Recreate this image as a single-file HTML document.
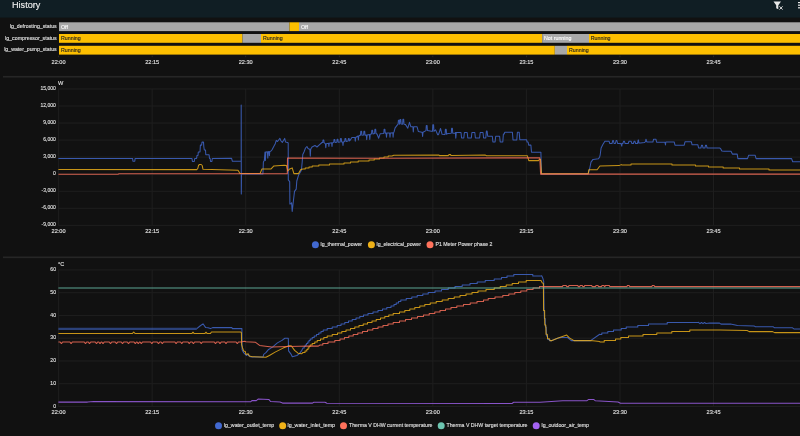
<!DOCTYPE html>
<html><head><meta charset="utf-8"><title>History</title>
<style>html,body{margin:0;padding:0;background:#111111;width:800px;height:436px;overflow:hidden;font-family:"Liberation Sans", sans-serif;}svg{display:block;will-change:transform;}</style>
</head><body><svg width="800" height="436" viewBox="0 0 800 436" font-family='"Liberation Sans", sans-serif'><rect x="0" y="0" width="800" height="17.6" fill="#101e24"/><text x="12.00" y="8.20" font-size="9.8" text-anchor="start" fill="#f0f0f0" stroke="#f0f0f0" stroke-width="0.12" font-weight="normal" textLength="28.4" lengthAdjust="spacingAndGlyphs">History</text><text x="56.70" y="27.90" font-size="5.6" text-anchor="end" fill="#e1e1e1" stroke="#e1e1e1" stroke-width="0.12" font-weight="normal" textLength="46.9" lengthAdjust="spacingAndGlyphs">lg_defrosting_status</text><rect x="59" y="22.3" width="230.50" height="8.8" fill="#a8a8a8"/><rect x="289.5" y="22.3" width="9.50" height="8.8" fill="#fdbf00"/><rect x="299" y="22.3" width="501.00" height="8.8" fill="#a8a8a8"/><text x="61.00" y="28.50" font-size="5.3" text-anchor="start" fill="#fff" stroke="#fff" stroke-width="0.12" font-weight="normal">Off</text><text x="301.00" y="28.50" font-size="5.3" text-anchor="start" fill="#fff" stroke="#fff" stroke-width="0.12" font-weight="normal">Off</text><text x="56.70" y="39.60" font-size="5.6" text-anchor="end" fill="#e1e1e1" stroke="#e1e1e1" stroke-width="0.12" font-weight="normal" textLength="51.7" lengthAdjust="spacingAndGlyphs">lg_compressor_status</text><rect x="59" y="34.0" width="183.50" height="8.8" fill="#fdbf00"/><rect x="242.5" y="34.0" width="18.50" height="8.8" fill="#a8a8a8"/><rect x="261" y="34.0" width="281.20" height="8.8" fill="#fdbf00"/><rect x="542.2" y="34.0" width="46.80" height="8.8" fill="#a8a8a8"/><rect x="589" y="34.0" width="211.00" height="8.8" fill="#fdbf00"/><text x="61.00" y="40.20" font-size="5.3" text-anchor="start" fill="#222" stroke="#222" stroke-width="0.12" font-weight="normal">Running</text><text x="263.00" y="40.20" font-size="5.3" text-anchor="start" fill="#222" stroke="#222" stroke-width="0.12" font-weight="normal">Running</text><text x="544.00" y="40.20" font-size="5.3" text-anchor="start" fill="#fff" stroke="#fff" stroke-width="0.12" font-weight="normal">Not running</text><text x="590.80" y="40.20" font-size="5.3" text-anchor="start" fill="#222" stroke="#222" stroke-width="0.12" font-weight="normal">Running</text><text x="56.70" y="51.40" font-size="5.6" text-anchor="end" fill="#e1e1e1" stroke="#e1e1e1" stroke-width="0.12" font-weight="normal" textLength="52.5" lengthAdjust="spacingAndGlyphs">lg_water_pump_status</text><rect x="59" y="45.8" width="495.80" height="8.8" fill="#fdbf00"/><rect x="554.8" y="45.8" width="12.20" height="8.8" fill="#a8a8a8"/><rect x="567" y="45.8" width="233.00" height="8.8" fill="#fdbf00"/><text x="61.00" y="52.00" font-size="5.3" text-anchor="start" fill="#222" stroke="#222" stroke-width="0.12" font-weight="normal">Running</text><text x="569.00" y="52.00" font-size="5.3" text-anchor="start" fill="#222" stroke="#222" stroke-width="0.12" font-weight="normal">Running</text><rect x="58.20" y="55.6" width="0.8" height="1.6" fill="#2c2c2c"/><text x="58.60" y="63.60" font-size="5.6" text-anchor="middle" fill="#e1e1e1" stroke="#e1e1e1" stroke-width="0.12" font-weight="normal">22:00</text><rect x="151.76" y="55.6" width="0.8" height="1.6" fill="#2c2c2c"/><text x="152.16" y="63.60" font-size="5.6" text-anchor="middle" fill="#e1e1e1" stroke="#e1e1e1" stroke-width="0.12" font-weight="normal">22:15</text><rect x="245.32" y="55.6" width="0.8" height="1.6" fill="#2c2c2c"/><text x="245.72" y="63.60" font-size="5.6" text-anchor="middle" fill="#e1e1e1" stroke="#e1e1e1" stroke-width="0.12" font-weight="normal">22:30</text><rect x="338.88" y="55.6" width="0.8" height="1.6" fill="#2c2c2c"/><text x="339.28" y="63.60" font-size="5.6" text-anchor="middle" fill="#e1e1e1" stroke="#e1e1e1" stroke-width="0.12" font-weight="normal">22:45</text><rect x="432.44" y="55.6" width="0.8" height="1.6" fill="#2c2c2c"/><text x="432.84" y="63.60" font-size="5.6" text-anchor="middle" fill="#e1e1e1" stroke="#e1e1e1" stroke-width="0.12" font-weight="normal">23:00</text><rect x="526.00" y="55.6" width="0.8" height="1.6" fill="#2c2c2c"/><text x="526.40" y="63.60" font-size="5.6" text-anchor="middle" fill="#e1e1e1" stroke="#e1e1e1" stroke-width="0.12" font-weight="normal">23:15</text><rect x="619.56" y="55.6" width="0.8" height="1.6" fill="#2c2c2c"/><text x="619.96" y="63.60" font-size="5.6" text-anchor="middle" fill="#e1e1e1" stroke="#e1e1e1" stroke-width="0.12" font-weight="normal">23:30</text><rect x="713.12" y="55.6" width="0.8" height="1.6" fill="#2c2c2c"/><text x="713.52" y="63.60" font-size="5.6" text-anchor="middle" fill="#e1e1e1" stroke="#e1e1e1" stroke-width="0.12" font-weight="normal">23:45</text><rect x="3" y="75.95" width="797" height="1.6" fill="#262626"/><rect x="3" y="256.5" width="797" height="1.6" fill="#262626"/><rect x="58.1" y="88.45" width="742" height="1" fill="#1f1f1f"/><text x="55.90" y="89.95" font-size="5.6" text-anchor="end" fill="#e1e1e1" stroke="#e1e1e1" stroke-width="0.12" font-weight="normal" textLength="15.42" lengthAdjust="spacingAndGlyphs">15,000</text><rect x="58.1" y="105.50" width="742" height="1" fill="#1f1f1f"/><text x="55.90" y="107.00" font-size="5.6" text-anchor="end" fill="#e1e1e1" stroke="#e1e1e1" stroke-width="0.12" font-weight="normal" textLength="15.42" lengthAdjust="spacingAndGlyphs">12,000</text><rect x="58.1" y="122.55" width="742" height="1" fill="#1f1f1f"/><text x="55.90" y="124.05" font-size="5.6" text-anchor="end" fill="#e1e1e1" stroke="#e1e1e1" stroke-width="0.12" font-weight="normal" textLength="12.62" lengthAdjust="spacingAndGlyphs">9,000</text><rect x="58.1" y="139.60" width="742" height="1" fill="#1f1f1f"/><text x="55.90" y="141.10" font-size="5.6" text-anchor="end" fill="#e1e1e1" stroke="#e1e1e1" stroke-width="0.12" font-weight="normal" textLength="12.62" lengthAdjust="spacingAndGlyphs">6,000</text><rect x="58.1" y="156.65" width="742" height="1" fill="#1f1f1f"/><text x="55.90" y="158.15" font-size="5.6" text-anchor="end" fill="#e1e1e1" stroke="#e1e1e1" stroke-width="0.12" font-weight="normal" textLength="12.62" lengthAdjust="spacingAndGlyphs">3,000</text><rect x="58.1" y="173.70" width="742" height="1" fill="#1f1f1f"/><text x="55.90" y="175.20" font-size="5.6" text-anchor="end" fill="#e1e1e1" stroke="#e1e1e1" stroke-width="0.12" font-weight="normal" textLength="2.8" lengthAdjust="spacingAndGlyphs">0</text><rect x="58.1" y="190.75" width="742" height="1" fill="#1f1f1f"/><text x="55.90" y="192.25" font-size="5.6" text-anchor="end" fill="#e1e1e1" stroke="#e1e1e1" stroke-width="0.12" font-weight="normal" textLength="14.29" lengthAdjust="spacingAndGlyphs">-3,000</text><rect x="58.1" y="207.80" width="742" height="1" fill="#1f1f1f"/><text x="55.90" y="209.30" font-size="5.6" text-anchor="end" fill="#e1e1e1" stroke="#e1e1e1" stroke-width="0.12" font-weight="normal" textLength="14.29" lengthAdjust="spacingAndGlyphs">-6,000</text><rect x="58.1" y="224.85" width="742" height="1" fill="#1f1f1f"/><text x="55.90" y="226.35" font-size="5.6" text-anchor="end" fill="#e1e1e1" stroke="#e1e1e1" stroke-width="0.12" font-weight="normal" textLength="14.29" lengthAdjust="spacingAndGlyphs">-9,000</text><rect x="58.10" y="88.95" width="1" height="136.40" fill="#1f1f1f"/><rect x="151.66" y="88.95" width="1" height="136.40" fill="#1f1f1f"/><rect x="245.22" y="88.95" width="1" height="136.40" fill="#1f1f1f"/><rect x="338.78" y="88.95" width="1" height="136.40" fill="#1f1f1f"/><rect x="432.34" y="88.95" width="1" height="136.40" fill="#1f1f1f"/><rect x="525.90" y="88.95" width="1" height="136.40" fill="#1f1f1f"/><rect x="619.46" y="88.95" width="1" height="136.40" fill="#1f1f1f"/><rect x="713.02" y="88.95" width="1" height="136.40" fill="#1f1f1f"/><text x="58.60" y="233.10" font-size="5.6" text-anchor="middle" fill="#e1e1e1" stroke="#e1e1e1" stroke-width="0.12" font-weight="normal">22:00</text><text x="152.16" y="233.10" font-size="5.6" text-anchor="middle" fill="#e1e1e1" stroke="#e1e1e1" stroke-width="0.12" font-weight="normal">22:15</text><text x="245.72" y="233.10" font-size="5.6" text-anchor="middle" fill="#e1e1e1" stroke="#e1e1e1" stroke-width="0.12" font-weight="normal">22:30</text><text x="339.28" y="233.10" font-size="5.6" text-anchor="middle" fill="#e1e1e1" stroke="#e1e1e1" stroke-width="0.12" font-weight="normal">22:45</text><text x="432.84" y="233.10" font-size="5.6" text-anchor="middle" fill="#e1e1e1" stroke="#e1e1e1" stroke-width="0.12" font-weight="normal">23:00</text><text x="526.40" y="233.10" font-size="5.6" text-anchor="middle" fill="#e1e1e1" stroke="#e1e1e1" stroke-width="0.12" font-weight="normal">23:15</text><text x="619.96" y="233.10" font-size="5.6" text-anchor="middle" fill="#e1e1e1" stroke="#e1e1e1" stroke-width="0.12" font-weight="normal">23:30</text><text x="713.52" y="233.10" font-size="5.6" text-anchor="middle" fill="#e1e1e1" stroke="#e1e1e1" stroke-width="0.12" font-weight="normal">23:45</text><text x="58.00" y="85.00" font-size="5.6" text-anchor="start" fill="#e1e1e1" stroke="#e1e1e1" stroke-width="0.12" font-weight="normal">W</text><rect x="58.1" y="269.40" width="742" height="1" fill="#1f1f1f"/><text x="56.00" y="271.10" font-size="5.6" text-anchor="end" fill="#e1e1e1" stroke="#e1e1e1" stroke-width="0.12" font-weight="normal" textLength="5.73" lengthAdjust="spacingAndGlyphs">60</text><rect x="58.1" y="292.17" width="742" height="1" fill="#1f1f1f"/><text x="56.00" y="293.87" font-size="5.6" text-anchor="end" fill="#e1e1e1" stroke="#e1e1e1" stroke-width="0.12" font-weight="normal" textLength="5.73" lengthAdjust="spacingAndGlyphs">50</text><rect x="58.1" y="314.94" width="742" height="1" fill="#1f1f1f"/><text x="56.00" y="316.64" font-size="5.6" text-anchor="end" fill="#e1e1e1" stroke="#e1e1e1" stroke-width="0.12" font-weight="normal" textLength="5.73" lengthAdjust="spacingAndGlyphs">40</text><rect x="58.1" y="337.71" width="742" height="1" fill="#1f1f1f"/><text x="56.00" y="339.41" font-size="5.6" text-anchor="end" fill="#e1e1e1" stroke="#e1e1e1" stroke-width="0.12" font-weight="normal" textLength="5.73" lengthAdjust="spacingAndGlyphs">30</text><rect x="58.1" y="360.48" width="742" height="1" fill="#1f1f1f"/><text x="56.00" y="362.18" font-size="5.6" text-anchor="end" fill="#e1e1e1" stroke="#e1e1e1" stroke-width="0.12" font-weight="normal" textLength="5.73" lengthAdjust="spacingAndGlyphs">20</text><rect x="58.1" y="383.25" width="742" height="1" fill="#1f1f1f"/><text x="56.00" y="384.95" font-size="5.6" text-anchor="end" fill="#e1e1e1" stroke="#e1e1e1" stroke-width="0.12" font-weight="normal" textLength="5.73" lengthAdjust="spacingAndGlyphs">10</text><rect x="58.1" y="406.02" width="742" height="1" fill="#1f1f1f"/><text x="56.00" y="407.72" font-size="5.6" text-anchor="end" fill="#e1e1e1" stroke="#e1e1e1" stroke-width="0.12" font-weight="normal" textLength="2.86" lengthAdjust="spacingAndGlyphs">0</text><rect x="58.10" y="269.90" width="1" height="136.62" fill="#1f1f1f"/><rect x="151.66" y="269.90" width="1" height="136.62" fill="#1f1f1f"/><rect x="245.22" y="269.90" width="1" height="136.62" fill="#1f1f1f"/><rect x="338.78" y="269.90" width="1" height="136.62" fill="#1f1f1f"/><rect x="432.34" y="269.90" width="1" height="136.62" fill="#1f1f1f"/><rect x="525.90" y="269.90" width="1" height="136.62" fill="#1f1f1f"/><rect x="619.46" y="269.90" width="1" height="136.62" fill="#1f1f1f"/><rect x="713.02" y="269.90" width="1" height="136.62" fill="#1f1f1f"/><text x="58.60" y="414.20" font-size="5.6" text-anchor="middle" fill="#e1e1e1" stroke="#e1e1e1" stroke-width="0.12" font-weight="normal">22:00</text><text x="152.16" y="414.20" font-size="5.6" text-anchor="middle" fill="#e1e1e1" stroke="#e1e1e1" stroke-width="0.12" font-weight="normal">22:15</text><text x="245.72" y="414.20" font-size="5.6" text-anchor="middle" fill="#e1e1e1" stroke="#e1e1e1" stroke-width="0.12" font-weight="normal">22:30</text><text x="339.28" y="414.20" font-size="5.6" text-anchor="middle" fill="#e1e1e1" stroke="#e1e1e1" stroke-width="0.12" font-weight="normal">22:45</text><text x="432.84" y="414.20" font-size="5.6" text-anchor="middle" fill="#e1e1e1" stroke="#e1e1e1" stroke-width="0.12" font-weight="normal">23:00</text><text x="526.40" y="414.20" font-size="5.6" text-anchor="middle" fill="#e1e1e1" stroke="#e1e1e1" stroke-width="0.12" font-weight="normal">23:15</text><text x="619.96" y="414.20" font-size="5.6" text-anchor="middle" fill="#e1e1e1" stroke="#e1e1e1" stroke-width="0.12" font-weight="normal">23:30</text><text x="713.52" y="414.20" font-size="5.6" text-anchor="middle" fill="#e1e1e1" stroke="#e1e1e1" stroke-width="0.12" font-weight="normal">23:45</text><text x="58.00" y="265.80" font-size="5.6" text-anchor="start" fill="#e1e1e1" stroke="#e1e1e1" stroke-width="0.12" font-weight="normal">°C</text><circle cx="315.4" cy="244.8" r="3.5" fill="#4269d0"/><text x="320.60" y="246.30" font-size="5.6" text-anchor="start" fill="#e1e1e1" stroke="#e1e1e1" stroke-width="0.12" font-weight="normal" textLength="41.5" lengthAdjust="spacingAndGlyphs">lg_thermal_power</text><circle cx="371.4" cy="244.8" r="3.5" fill="#efb118"/><text x="376.50" y="246.30" font-size="5.6" text-anchor="start" fill="#e1e1e1" stroke="#e1e1e1" stroke-width="0.12" font-weight="normal" textLength="44.5" lengthAdjust="spacingAndGlyphs">lg_electrical_power</text><circle cx="430" cy="244.8" r="3.5" fill="#ff725c"/><text x="435.50" y="246.30" font-size="5.6" text-anchor="start" fill="#e1e1e1" stroke="#e1e1e1" stroke-width="0.12" font-weight="normal" textLength="57" lengthAdjust="spacingAndGlyphs">P1 Meter Power phase 2</text><circle cx="218.5" cy="425.7" r="3.5" fill="#4269d0"/><text x="223.80" y="426.70" font-size="5.6" text-anchor="start" fill="#e1e1e1" stroke="#e1e1e1" stroke-width="0.12" font-weight="normal" textLength="50.5" lengthAdjust="spacingAndGlyphs">lg_water_outlet_temp</text><circle cx="282.7" cy="425.7" r="3.5" fill="#efb118"/><text x="287.50" y="426.70" font-size="5.6" text-anchor="start" fill="#e1e1e1" stroke="#e1e1e1" stroke-width="0.12" font-weight="normal" textLength="47.5" lengthAdjust="spacingAndGlyphs">lg_water_inlet_temp</text><circle cx="343.5" cy="425.7" r="3.5" fill="#ff725c"/><text x="349.00" y="426.70" font-size="5.6" text-anchor="start" fill="#e1e1e1" stroke="#e1e1e1" stroke-width="0.12" font-weight="normal" textLength="83.5" lengthAdjust="spacingAndGlyphs">Therma V DHW current temperature</text><circle cx="441.2" cy="425.7" r="3.5" fill="#6cc5b0"/><text x="446.50" y="426.70" font-size="5.6" text-anchor="start" fill="#e1e1e1" stroke="#e1e1e1" stroke-width="0.12" font-weight="normal" textLength="81" lengthAdjust="spacingAndGlyphs">Therma V DHW target temperature</text><circle cx="536.2" cy="425.7" r="3.5" fill="#a463f2"/><text x="541.50" y="426.70" font-size="5.6" text-anchor="start" fill="#e1e1e1" stroke="#e1e1e1" stroke-width="0.12" font-weight="normal" textLength="47.5" lengthAdjust="spacingAndGlyphs">lg_outdoor_air_temp</text><path d="M58.4,158.4 L132.6,158.4 L132.9,161.3 L134.8,161.3 L135.1,158.4 L192.0,158.5 L192.4,161.4 L194.3,161.4 L194.7,158.5 L196.6,158.5 L197.0,155.4 L198.0,155.4 L198.3,152.0 L200.0,152.0 L200.4,145.1 L201.6,145.1 L202.0,142.1 L203.5,142.1 L203.8,146.5 L204.3,150.0 L205.5,150.0 L205.8,154.8 L209.1,154.8 L209.5,158.5 L210.2,158.5 L210.5,161.4 L211.9,161.4 L212.3,158.5 L231.6,158.3 L232.4,161.3 L240.4,161.3 L241.2,161.3 L241.2,104.9 L241.3,194.0 L241.5,173.9 L262.9,173.9 L263.4,162.1 L264.3,160.5 L265.0,152.1 L265.4,160.5 L265.8,152.0 L267.4,151.7 L267.8,158.1 L268.2,151.7 L269.1,151.5 L269.4,155.7 L269.8,151.4 L270.6,151.3 L271.9,150.0 L273.5,146.9 L275.1,144.0 L276.3,140.4 L277.5,141.5 L279.0,139.5 L279.9,138.4 L281.0,141.0 L282.3,142.4 L283.5,140.5 L284.7,138.4 L285.5,142.0 L287.5,142.4 L288.2,143.0 L288.3,179.9 L289.7,181.6 L289.9,204.0 L291.2,203.5 L291.6,202.8 L292.2,211.4 L293.3,201.7 L294.5,191.4 L296.2,189.1 L296.8,181.0 L298.5,175.3 L301.4,170.2 L302.2,162.0 L302.8,154.4 L304.0,152.0 L305.5,148.0 L306.9,146.5 L308.0,148.5 L309.5,149.3 L310.0,149.3 L309.9,149.3 L310.3,156.1 L310.7,149.3 L312.0,147.0 L315.0,145.5 L317.0,147.0 L319.3,144.8 L322.0,142.5 L323.0,142.5 L322.7,142.5 L323.0,140.0 L323.8,140.0 L324.1,142.5 L325.0,143.5 L325.4,143.8 L325.8,147.8 L326.2,143.8 L328.5,143.3 L328.9,146.5 L329.2,143.3 L331.6,142.8 L332.0,146.5 L332.4,142.8 L333.7,142.5 L334.0,139.5 L334.8,139.5 L335.1,142.5 L336.8,142.3 L337.1,139.3 L337.9,139.3 L338.2,142.3 L340.2,142.0 L340.5,138.5 L341.3,138.5 L341.6,142.0 L342.6,142.0 L343.0,145.5 L343.4,142.0 L344.7,141.5 L345.0,138.5 L345.8,138.5 L346.1,141.5 L348.1,141.0 L348.4,138.5 L349.2,138.5 L349.5,141.0 L350.0,140.5 L351.9,137.5 L353.5,137.5 L354.9,137.5 L355.3,141.3 L355.7,137.5 L358.0,136.0 L358.4,140.0 L358.8,136.0 L360.0,135.3 L360.5,135.2 L360.8,131.3 L361.6,131.3 L361.9,135.2 L363.6,135.1 L363.9,131.3 L364.7,131.3 L365.0,135.1 L365.6,135.1 L366.3,135.1 L366.7,139.6 L367.1,135.1 L369.4,134.5 L369.8,139.5 L370.2,134.5 L371.0,134.0 L371.5,134.0 L371.8,130.3 L372.6,130.3 L372.9,134.0 L374.6,133.5 L374.9,129.3 L375.7,129.3 L376.0,133.5 L377.0,134.0 L378.7,138.2 L380.1,133.8 L383.0,133.5 L383.8,133.2 L384.1,129.3 L384.9,129.3 L385.2,133.2 L386.0,133.1 L386.1,133.1 L386.5,137.2 L386.9,133.1 L389.6,133.0 L390.0,137.2 L390.4,133.0 L392.8,132.8 L393.1,137.2 L393.5,132.8 L394.0,132.0 L395.1,127.8 L397.8,124.4 L398.1,124.2 L398.4,120.2 L399.2,120.2 L399.5,124.2 L399.7,124.0 L400.0,119.6 L400.8,119.6 L401.1,124.0 L401.3,124.0 L402.6,124.2 L402.9,119.2 L403.7,119.2 L404.0,124.2 L405.4,124.4 L407.8,128.2 L409.5,122.3 L410.9,126.8 L412.9,126.8 L413.3,132.0 L413.7,126.8 L417.1,126.8 L418.4,131.6 L421.9,132.3 L422.2,132.3 L422.6,136.4 L423.0,132.3 L426.0,130.6 L426.0,130.5 L426.3,125.5 L427.1,125.5 L427.4,130.5 L431.5,131.3 L432.5,131.3 L432.8,124.8 L433.6,124.8 L433.9,131.3 L435.6,129.9 L437.7,134.7 L438.5,134.7 L440.5,128.5 L442.1,134.3 L444.8,134.6 L445.1,134.3 L445.4,129.3 L446.2,129.3 L446.5,134.3 L447.6,133.6 L451.0,133.2 L451.3,133.2 L451.6,128.2 L452.4,128.2 L452.7,133.2 L453.8,133.2 L455.1,133.2 L455.4,133.2 L455.8,138.2 L456.2,133.2 L455.4,132.5 L461.0,132.5 L461.6,138.0 L463.8,138.0 L464.4,132.5 L467.2,132.5 L467.8,138.0 L471.3,138.0 L471.9,132.5 L474.8,132.5 L475.4,138.0 L479.6,138.0 L480.2,132.5 L483.0,132.5 L483.6,138.0 L485.8,138.0 L486.4,131.0 L487.1,131.0 L487.7,136.2 L492.3,136.2 L492.9,141.9 L495.1,141.9 L495.7,136.2 L499.6,136.2 L500.2,141.9 L502.8,141.9 L503.4,134.0 L504.2,134.0 L504.8,132.2 L512.4,132.2 L513.0,139.9 L516.8,139.9 L517.4,132.2 L519.2,132.2 L519.8,139.7 L526.5,139.7 L527.1,142.0 L528.1,142.0 L528.7,145.1 L530.9,145.1 L531.5,152.3 L540.9,152.3 L541.5,173.9 L588.2,173.9 L589.6,169.0 L591.0,162.1 L593.0,159.4 L598.5,158.7 L599.6,157.0 L600.2,154.8 L601.1,148.0 L603.0,144.2 L604.9,141.2 L609.0,141.2 L609.8,143.5 L610.1,143.5 L612.0,143.5 L612.8,140.5 L613.4,140.5 L614.1,143.5 L615.4,143.5 L616.1,140.5 L616.9,140.5 L617.6,143.5 L621.0,143.5 L621.8,146.1 L622.1,143.5 L622.5,143.5 L622.9,143.5 L623.6,141.2 L624.4,141.2 L625.1,143.5 L628.2,143.5 L629.0,141.2 L631.1,141.2 L631.9,143.5 L633.4,143.5 L634.1,141.2 L634.9,141.2 L635.6,143.5 L637.4,143.5 L638.1,141.0 L638.3,139.9 L638.6,141.0 L638.9,143.1 L640.5,143.0 L644.5,142.6 L645.5,141.5 L646.0,139.2 L646.6,141.5 L647.2,142.0 L647.4,142.0 L652.9,142.0 L653.6,139.2 L655.9,139.2 L656.6,142.2 L664.9,142.2 L665.5,145.0 L665.8,142.0 L666.1,142.0 L674.2,142.0 L675.0,145.2 L684.2,145.2 L685.0,141.8 L691.4,141.8 L692.1,144.8 L697.9,144.8 L698.6,148.0 L700.9,148.0 L701.6,145.2 L702.4,145.2 L703.1,148.0 L704.9,148.0 L705.6,145.2 L706.4,145.2 L707.1,148.0 L719.6,148.0 L720.5,148.4 L721.9,151.1 L724.1,151.3 L731.0,151.3 L732.4,154.1 L737.2,154.1 L737.9,158.6 L747.5,158.6 L748.7,155.2 L755.1,155.2 L756.1,158.6 L791.6,158.6 L792.7,161.7 L800.0,161.7" fill="none" stroke="#4269d0" stroke-width="1.05" stroke-opacity="0.82" stroke-linejoin="round"/><path d="M58.4,169.5 L196.8,169.6 L197.8,168.5 L198.6,165.2 L199.6,164.5 L201.2,164.5 L202.2,165.5 L203.0,169.3 L238.0,170.3 L240.0,173.5 L260.1,173.5 L262.0,168.9 L271.1,168.9 L273.9,165.9 L284.2,165.2 L286.5,165.6 L287.7,171.0 L289.7,168.9 L292.2,167.9 L293.9,173.6 L298.5,173.6 L300.8,169.6 L303.0,169.0 L305.2,169.0 L305.2,168.0 L309.0,168.0 L309.0,167.0 L312.2,167.0 L312.2,166.0 L318.8,166.0 L318.8,165.0 L329.5,165.0 L329.5,164.0 L344.0,164.0 L344.0,163.0 L350.5,163.0 L350.5,162.0 L358.2,162.0 L358.2,161.0 L369.0,161.0 L369.0,160.0 L374.2,160.0 L374.2,159.0 L379.5,159.0 L379.5,158.0 L384.0,158.0 L384.0,157.0 L388.2,157.0 L388.2,156.0 L392.0,156.0 L393.8,155.2 L393.8,155.2 L439.0,155.0 L439.5,155.6 L448.4,155.6 L449.0,154.6 L450.5,154.6 L451.0,155.4 L485.4,155.1 L486.5,155.8 L527.4,155.8 L528.8,160.6 L538.4,160.6 L539.5,159.2 L540.5,159.2 L541.5,173.6 L588.2,173.8 L588.9,169.7 L597.1,169.7 L599.9,166.0 L619.1,165.6 L621.2,164.6 L622.0,165.0 L631.0,165.0 L631.0,164.0 L672.0,164.0 L672.0,165.0 L695.5,165.0 L695.5,166.0 L708.5,166.0 L708.5,167.0 L723.2,167.0 L723.2,168.0 L739.5,168.0 L739.5,169.0 L769.0,169.0 L769.0,170.0 L800.0,170.0" fill="none" stroke="#efb118" stroke-width="1.05" stroke-opacity="0.82" stroke-linejoin="round"/><path d="M58.4,174.3 L118.0,174.3 L119.0,173.8 L287.3,173.7 L287.5,157.9 L380.0,158.2 L539.8,157.8 L540.6,174.1 L800.0,174.1" fill="none" stroke="#ff725c" stroke-width="1.05" stroke-opacity="0.82" stroke-linejoin="round"/><path d="M58.4,328.9 L196.8,328.9" fill="none" stroke="#4269d0" stroke-width="2.1" stroke-opacity="0.55"/><path d="M196.8,328.6 L200.0,326.0 L203.0,323.8 L205.7,327.6 L208.0,327.8 L210.5,328.6 L212.6,327.6 L231.8,327.6 L232.5,328.6 L241.3,328.6 L241.9,328.6 L242.1,349.8 L243.6,352.7 L246.5,355.5 L247.6,354.4 L249.9,356.7 L252.2,356.9 L263.1,356.9 L263.1,356.9 L263.7,354.4 L265.9,352.7 L268.2,349.8 L272.8,346.9 L277.4,342.9 L282.0,340.4 L284.9,338.3 L288.3,338.3 L288.6,350.9 L291.2,354.4 L292.3,356.7 L296.9,355.5 L299.2,353.8 L301.5,350.9 L303.0,348.0 L304.2,348.0 L304.2,346.5 L305.2,346.5 L305.2,345.0 L306.5,345.0 L306.5,343.5 L307.8,343.5 L307.8,342.0 L309.0,342.0 L309.0,340.5 L310.2,340.5 L310.2,339.0 L312.2,339.0 L312.2,337.5 L314.2,337.5 L314.2,336.0 L316.5,336.0 L316.5,334.5 L318.8,334.5 L318.8,333.0 L321.0,333.0 L321.0,331.5 L323.2,331.5 L323.2,330.0 L327.2,330.0 L327.2,328.5 L332.2,328.5 L332.2,327.0 L337.2,327.0 L337.2,325.5 L341.0,325.5 L341.0,324.0 L344.8,324.0 L344.8,322.5 L348.5,322.5 L348.5,321.0 L352.2,321.0 L352.2,319.5 L356.0,319.5 L356.0,318.0 L359.8,318.0 L359.8,316.5 L363.5,316.5 L363.5,315.0 L368.0,315.0 L368.0,313.5 L373.0,313.5 L373.0,312.0 L378.0,312.0 L378.0,310.5 L382.5,310.5 L382.5,309.0 L386.8,309.0 L386.8,307.5 L391.0,307.5 L391.0,306.0 L394.0,306.0 L394.0,304.5 L396.2,304.5 L396.2,303.0 L398.5,303.0 L398.5,301.5 L400.8,301.5 L400.8,300.0 L406.2,300.0 L406.2,298.5 L411.8,298.5 L411.8,297.0 L417.2,297.0 L417.2,295.5 L422.8,295.5 L422.8,294.0 L428.2,294.0 L428.2,292.5 L435.0,292.5 L435.0,291.0 L441.5,291.0 L441.5,289.5 L448.2,289.5 L448.2,288.0 L455.0,288.0 L455.0,286.5 L462.2,286.5 L462.2,285.0 L470.0,285.0 L470.0,283.5 L477.2,283.5 L477.2,282.0 L485.2,282.0 L485.2,280.5 L494.2,280.5 L494.2,279.0 L501.5,279.0 L501.5,277.5 L507.0,277.5 L507.0,276.0 L513.8,276.0 L513.8,274.5 L532.8,274.5 L532.8,276.0 L541.0,276.0 L541.7,275.7 L543.0,278.8 L543.7,281.5 L544.1,310.0 L544.4,318.5 L545.2,318.5 L545.4,327.0 L546.2,327.0 L546.5,336.0 L547.5,336.0 L547.8,339.5 L549.0,339.5 L549.5,340.6 L552.0,340.6 L557.5,338.3 L561.2,337.5 L567.6,337.5 L571.3,340.6 L590.6,340.6 L599.7,334.2 L600.0,334.5 L601.8,334.5 L601.8,333.0 L607.8,333.0 L607.8,331.5 L613.5,331.5 L613.5,330.0 L621.2,330.0 L621.2,328.5 L626.2,328.5 L626.2,327.0 L637.8,327.0 L637.8,325.5 L648.5,325.5 L648.5,324.0 L667.2,324.0 L667.2,322.5 L698.0,322.5 L698.4,322.3 L700.0,323.7 L701.5,322.5 L703.0,323.7 L704.5,322.5 L706.0,323.5 L709.4,323.1 L719.6,323.1 L721.0,324.1 L730.6,324.1 L737.5,325.4 L754.0,325.9 L755.4,326.8 L773.3,326.8 L774.6,327.8 L792.5,327.8 L793.9,328.9 L800.0,328.9" fill="none" stroke="#4269d0" stroke-width="1.05" stroke-opacity="0.82" stroke-linejoin="round"/><path d="M58.4,333.4 L132.5,333.4 L133.7,332.0 L135.0,333.4 L192.0,333.4 L193.0,332.2 L194.0,333.4 L205.0,333.4 L206.0,332.2 L207.0,333.4 L210.5,333.4 L211.5,332.0 L240.1,332.0 L240.7,332.0 L241.4,332.6 L241.6,344.6 L242.4,347.5 L243.6,350.9 L245.3,351.5 L245.9,354.4 L248.2,353.8 L249.3,356.1 L252.2,356.7 L265.9,357.2 L265.9,357.2 L269.4,355.5 L275.1,352.1 L283.1,348.1 L288.9,345.8 L291.2,345.8 L294.6,350.4 L298.0,353.2 L301.5,353.8 L303.0,352.5 L305.0,352.5 L305.0,351.0 L306.8,351.0 L306.8,349.5 L308.0,349.5 L308.0,348.0 L309.0,348.0 L309.0,346.5 L310.2,346.5 L310.2,345.0 L312.2,345.0 L312.2,343.5 L314.8,343.5 L314.8,342.0 L317.2,342.0 L317.2,340.5 L320.5,340.5 L320.5,339.0 L323.8,339.0 L323.8,337.5 L327.2,337.5 L327.2,336.0 L332.2,336.0 L332.2,334.5 L337.5,334.5 L337.5,333.0 L341.8,333.0 L341.8,331.5 L346.0,331.5 L346.0,330.0 L350.5,330.0 L350.5,328.5 L354.8,328.5 L354.8,327.0 L359.0,327.0 L359.0,325.5 L363.2,325.5 L363.2,324.0 L367.5,324.0 L367.5,322.5 L372.0,322.5 L372.0,321.0 L376.2,321.0 L376.2,319.5 L380.5,319.5 L380.5,318.0 L384.8,318.0 L384.8,316.5 L388.8,316.5 L388.8,315.0 L393.2,315.0 L393.2,313.5 L399.5,313.5 L399.5,312.0 L404.8,312.0 L404.8,310.5 L409.8,310.5 L409.8,309.0 L414.8,309.0 L414.8,307.5 L419.8,307.5 L419.8,306.0 L424.8,306.0 L424.8,304.5 L430.2,304.5 L430.2,303.0 L436.2,303.0 L436.2,301.5 L442.2,301.5 L442.2,300.0 L448.2,300.0 L448.2,298.5 L454.2,298.5 L454.2,297.0 L460.0,297.0 L460.0,295.5 L466.0,295.5 L466.0,294.0 L472.0,294.0 L472.0,292.5 L478.0,292.5 L478.0,291.0 L486.0,291.0 L486.0,289.5 L494.2,289.5 L494.2,288.0 L500.2,288.0 L500.2,286.5 L506.2,286.5 L506.2,285.0 L512.2,285.0 L512.2,283.5 L518.5,283.5 L518.5,282.0 L526.2,282.0 L526.2,280.5 L541.0,280.5 L542.3,282.9 L543.4,283.5 L543.6,310.4 L544.6,310.4 L544.8,325.0 L545.8,325.0 L546.0,334.2 L547.3,334.2 L547.6,338.8 L549.5,338.8 L550.0,340.6 L552.0,340.6 L557.5,338.3 L566.7,335.1 L569.4,337.9 L574.0,340.6 L590.6,340.6 L599.7,341.6 L600.0,342.0 L604.2,342.0 L604.2,340.5 L615.5,340.5 L615.5,339.0 L620.8,339.0 L620.8,337.5 L628.5,337.5 L628.5,336.0 L643.0,336.0 L643.0,334.5 L656.8,334.5 L656.8,333.0 L671.8,333.0 L671.8,331.5 L689.8,331.5 L689.8,330.0 L720.0,330.0 L747.1,330.5 L749.2,331.6 L772.6,331.6 L774.6,332.6 L800.0,332.6" fill="none" stroke="#efb118" stroke-width="1.05" stroke-opacity="0.82" stroke-linejoin="round"/><path d="M58.4,342.0 L60.2,342.0 L61.2,343.4 L61.6,343.4 L62.6,342.0 L69.9,342.0 L70.9,343.4 L71.3,343.4 L72.3,342.0 L84.3,342.0 L85.3,343.4 L85.7,343.4 L86.7,342.0 L88.3,342.0 L89.3,343.4 L89.7,343.4 L90.7,342.0 L95.3,342.0 L96.3,343.4 L96.7,343.4 L97.7,342.0 L98.8,342.0 L99.8,343.4 L100.2,343.4 L101.2,342.0 L101.8,342.0 L102.8,343.4 L103.2,343.4 L104.2,342.0 L109.3,342.0 L110.3,343.4 L110.7,343.4 L111.7,342.0 L115.3,342.0 L116.3,343.4 L116.7,343.4 L117.7,342.0 L121.3,342.0 L122.3,343.4 L122.7,343.4 L123.7,342.0 L127.3,342.0 L128.3,343.4 L128.7,343.4 L129.7,342.0 L134.1,342.0 L135.1,343.4 L135.5,343.4 L136.5,342.0 L137.1,342.0 L138.1,343.4 L138.5,343.4 L139.5,342.0 L140.1,342.0 L141.1,343.4 L141.5,343.4 L142.5,342.0 L150.6,342.0 L151.6,343.4 L152.0,343.4 L153.0,342.0 L157.3,342.0 L158.3,343.4 L158.7,343.4 L159.7,342.0 L161.1,342.0 L162.1,343.4 L162.5,343.4 L163.5,342.0 L174.9,342.0 L175.9,343.4 L176.3,343.4 L177.3,342.0 L180.6,342.0 L181.6,343.4 L181.9,343.4 L182.9,342.0 L188.1,342.0 L189.1,343.4 L189.4,343.4 L190.4,342.0 L192.2,342.0 L193.2,343.4 L193.6,343.4 L194.6,342.0 L200.1,342.0 L201.1,343.4 L201.4,343.4 L202.4,342.0 L214.3,342.0 L215.3,343.4 L215.7,343.4 L216.7,342.0 L218.8,342.0 L219.8,343.4 L220.2,343.4 L221.2,342.0 L224.8,342.0 L225.8,343.4 L226.2,343.4 L227.2,342.0 L236.1,342.0 L237.1,343.4 L237.5,343.4 L238.5,342.0 L241.0,342.0 L241.9,341.8 L244.7,341.2 L245.9,341.8 L255.6,342.3 L259.6,345.4 L271.7,346.9 L288.9,346.6 L288.9,346.6 L310.0,346.1 L318.3,346.1 L320.0,345.0 L322.8,345.0 L322.8,343.5 L328.0,343.5 L328.0,342.0 L334.8,342.0 L334.8,340.5 L340.0,340.5 L340.0,339.0 L344.5,339.0 L344.5,337.5 L348.8,337.5 L348.8,336.0 L353.2,336.0 L353.2,334.5 L357.8,334.5 L357.8,333.0 L362.5,333.0 L362.5,331.5 L367.5,331.5 L367.5,330.0 L372.8,330.0 L372.8,328.5 L378.0,328.5 L378.0,327.0 L383.0,327.0 L383.0,325.5 L388.0,325.5 L388.0,324.0 L393.2,324.0 L393.2,322.5 L399.5,322.5 L399.5,321.0 L405.5,321.0 L405.5,319.5 L411.5,319.5 L411.5,318.0 L417.5,318.0 L417.5,316.5 L423.5,316.5 L423.5,315.0 L429.2,315.0 L429.2,313.5 L434.8,313.5 L434.8,312.0 L440.0,312.0 L440.0,310.5 L445.5,310.5 L445.5,309.0 L451.0,309.0 L451.0,307.5 L456.8,307.5 L456.8,306.0 L463.5,306.0 L463.5,304.5 L470.2,304.5 L470.2,303.0 L477.0,303.0 L477.0,301.5 L483.5,301.5 L483.5,300.0 L488.2,300.0 L488.2,298.5 L495.0,298.5 L495.0,297.0 L502.8,297.0 L502.8,295.5 L508.8,295.5 L508.8,294.0 L514.8,294.0 L514.8,292.5 L520.8,292.5 L520.8,291.0 L526.8,291.0 L526.8,289.5 L533.0,289.5 L533.0,288.0 L539.5,288.0 L539.5,286.5 L541.0,286.5 L542.3,286.6 L543.0,286.6 L562.4,286.6 L563.2,285.4 L566.0,285.4 L566.8,286.6 L568.4,286.6 L569.2,285.4 L577.6,285.4 L578.4,286.6 L579.6,286.6 L580.4,285.4 L582.1,285.4 L582.9,286.6 L584.1,286.6 L584.9,285.4 L591.5,285.4 L592.3,286.6 L595.4,286.6 L596.2,285.4 L597.8,285.4 L598.6,286.6 L601.4,286.6 L602.2,285.4 L603.8,285.4 L604.6,286.6 L604.8,286.6 L605.6,285.4 L609.1,285.4 L609.9,286.6 L626.8,286.6 L627.6,285.4 L628.9,285.4 L629.7,286.6 L651.7,286.6 L652.5,285.4 L653.9,285.4 L654.7,286.6 L800.0,286.6" fill="none" stroke="#ff725c" stroke-width="1.05" stroke-opacity="0.82" stroke-linejoin="round"/><path d="M58.4,287.9 L800.0,287.9" fill="none" stroke="#6cc5b0" stroke-width="1.05" stroke-opacity="0.82" stroke-linejoin="round"/><path d="M58.4,402.1 L87.5,402.1 L93.8,401.4 L250.6,401.8 L251.9,400.6 L256.3,400.6 L258.1,399.1 L268.8,399.4 L270.6,401.5 L280.0,402.1 L282.5,403.1 L312.5,403.1 L313.8,402.3 L325.0,402.3 L326.9,403.3 L512.0,403.5 L513.7,402.3 L540.0,402.3 L562.7,400.7 L587.0,400.7 L588.7,399.4 L593.6,399.4 L595.2,400.7 L618.0,402.0 L620.5,403.3 L800.0,403.3" fill="none" stroke="#a463f2" stroke-width="1.05" stroke-opacity="0.82" stroke-linejoin="round"/><path d="M773.5,1.5 L781,1.5 L778.3,5.2 L778.3,9.3 L776.2,8.2 L776.2,5.2 Z" fill="#e8e8e8"/><path d="M779.5,6.3 L782.6,9.6 M782.6,6.3 L779.5,9.6" stroke="#e8e8e8" stroke-width="0.9"/><rect x="798" y="2" width="2" height="1.2" fill="#e8e8e8"/><rect x="798" y="4.6" width="2" height="1.2" fill="#e8e8e8"/><rect x="798" y="7.2" width="2" height="1.2" fill="#e8e8e8"/></svg></body></html>
